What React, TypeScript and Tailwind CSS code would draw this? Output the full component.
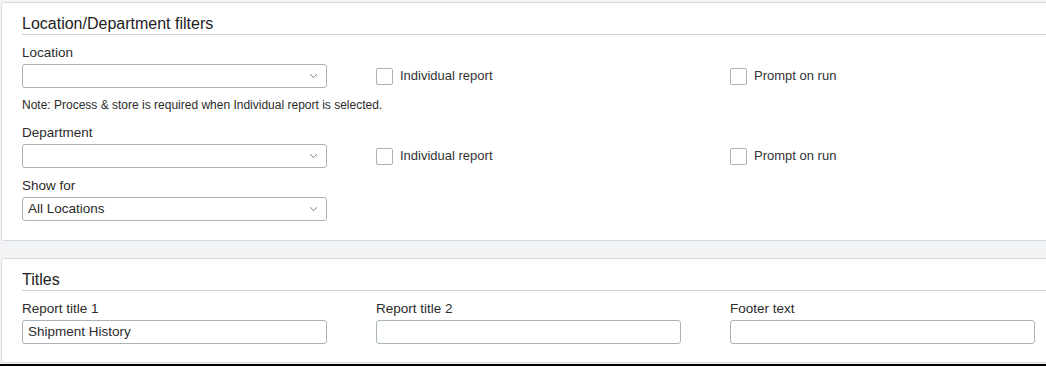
import React from "react";

const font = { fontFamily: '"Liberation Sans", Arial, sans-serif' };

function Chevron() {
  return (
    <svg width="9" height="6" viewBox="0 0 9 6" className="shrink-0">
      <path d="M1 1.2 L4.5 4.6 L8 1.2" fill="none" stroke="#7b848c" strokeWidth="1" />
    </svg>
  );
}

function Select({ value }: { value?: string }) {
  return (
    <div className="flex h-[24px] w-[305px] items-center justify-between rounded-[3px] border border-[#a9b3ba] bg-white pl-[5px] pr-[8px] text-[13.5px] text-[#2b2b2b]">
      <span>{value ?? ""}</span>
      <Chevron />
    </div>
  );
}

function Input({ value }: { value?: string }) {
  return (
    <div className="flex h-[24px] w-[305px] items-center rounded-[3px] border border-[#a9b3ba] bg-white pl-[5px] text-[13.5px] text-[#2b2b2b]">
      {value ?? ""}
    </div>
  );
}

function Check({ label }: { label: string }) {
  return (
    <div className="flex h-[24px] items-center gap-[7px]">
      <div className="h-[17px] w-[17px] rounded-[2px] border border-[#a9b3ba] bg-white" />
      <span className="text-[13px] text-[#333]">{label}</span>
    </div>
  );
}

function Label({ children, className = "" }: { children: React.ReactNode; className?: string }) {
  return <div className={`text-[13.5px] leading-[16px] text-[#2b2b2b] ${className}`}>{children}</div>;
}

function Title({ children }: { children: React.ReactNode }) {
  return (
    <div className="border-b border-[#cdd3d9] text-[16px] leading-[21px] text-[#222]">{children}</div>
  );
}

export default function App() {
  return (
    <div style={font} className="relative h-[371px] w-[1046px] overflow-hidden bg-[#f1f3f5]">
      <div className="pl-[1px] pt-[2px]">
        <div className="w-[1070px] rounded-[3px] border border-[#d3d9de] bg-white pl-[20px] pt-[10px] pb-[19px]">
          <Title>Location/Department filters</Title>
          <Label className="mt-[10px] mb-[3px]">Location</Label>
          <div className="grid grid-cols-[305px_305px_305px] gap-x-[49px]">
            <Select />
            <Check label="Individual report" />
            <Check label="Prompt on run" />
          </div>
          <div className="mt-[10px] text-[12px] leading-[14px] text-[#2b2b2b]">
            Note: Process &amp; store is required when Individual report is selected.
          </div>
          <Label className="mt-[13px] mb-[3px]">Department</Label>
          <div className="grid grid-cols-[305px_305px_305px] gap-x-[49px]">
            <Select />
            <Check label="Individual report" />
            <Check label="Prompt on run" />
          </div>
          <Label className="mt-[10px] mb-[3px]">Show for</Label>
          <Select value="All Locations" />
        </div>

        <div className="mt-[17px] w-[1070px] rounded-[3px] border border-[#d3d9de] bg-white pl-[20px] pt-[10px] pb-[18px]">
          <Title>Titles</Title>
          <div className="mt-[10px] grid grid-cols-[305px_305px_305px] gap-x-[49px]">
            <div>
              <Label className="mb-[3px]">Report title 1</Label>
              <Input value="Shipment History" />
            </div>
            <div>
              <Label className="mb-[3px]">Report title 2</Label>
              <Input />
            </div>
            <div>
              <Label className="mb-[3px]">Footer text</Label>
              <Input />
            </div>
          </div>
        </div>
      </div>
      <div className="mt-[1px] h-[2px] w-full bg-black" />
      <div className="h-[10px] w-full bg-white" />
    </div>
  );
}
